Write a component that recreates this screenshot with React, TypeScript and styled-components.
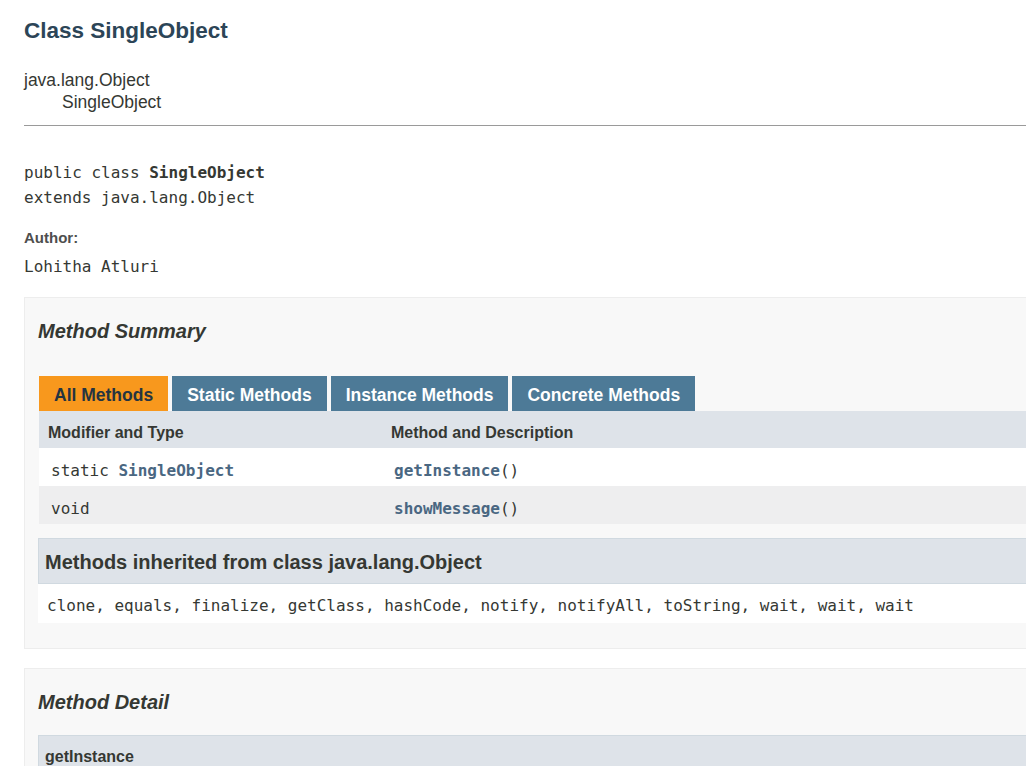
import React from "react";
import styled, { createGlobalStyle } from "styled-components";

const GlobalStyle = createGlobalStyle`
  html, body {
    margin: 0;
    padding: 0;
    overflow: hidden;
    background: #ffffff;
  }
  body {
    font-family: "Liberation Sans", Arial, Helvetica, sans-serif;
    color: #353833;
  }
`;

const Page = styled.div`
  width: 1070px;
  padding-left: 24px;
  box-sizing: border-box;
`;

const Title = styled.h2`
  margin: 18px 0 0;
  font-size: 22.5px;
  line-height: 26px;
  font-weight: bold;
  color: #2c4557;
`;

const Inheritance = styled.div`
  margin-top: 25px;
  font-size: 17.5px;
  line-height: 22.4px;
`;

const InheritLine = styled.div<{ $indent?: boolean }>`
  padding-left: ${(p) => (p.$indent ? "38px" : "0")};
`;

const Divider = styled.div`
  margin-top: 11px;
  border-top: 1px solid #9a9a9a;
  height: 0;
`;

const Mono = styled.div`
  font-family: "DejaVu Sans Mono", "Liberation Mono", monospace;
  font-size: 16px;
  line-height: 26px;
  color: #353833;
`;

const Signature = styled(Mono)`
  margin-top: 34px;
  line-height: 25px;
`;

const Strong = styled.b`
  font-weight: bold;
`;

const DtLabel = styled.div`
  margin-top: 19px;
  font-size: 15px;
  line-height: 18px;
  font-weight: bold;
  color: #4e4e4e;
`;

const DdValue = styled(Mono)`
  margin-top: 7px;
`;

const Block = styled.section<{ $gap: number }>`
  margin-top: ${(p) => p.$gap}px;
  background: #f8f8f8;
  border: 1px solid #ededed;
  padding: 21px 0 25px 14px;
`;

const BlockHeading = styled.h3`
  margin: 0 0 0 -1px;
  font-size: 20px;
  line-height: 24px;
  font-weight: bold;
  font-style: italic;
  color: #353833;
`;

const Tabs = styled.div`
  display: flex;
  gap: 4px;
  margin-top: 33px;
`;

const Tab = styled.span<{ $active?: boolean }>`
  display: block;
  height: 35px;
  box-sizing: border-box;
  padding: 3px 15px 0;
  line-height: 32px;
  font-size: 17.5px;
  font-weight: bold;
  white-space: nowrap;
  background: ${(p) => (p.$active ? "#f8981d" : "#4d7a97")};
  color: ${(p) => (p.$active ? "#253441" : "#ffffff")};
`;

const SummaryTable = styled.table`
  width: 100%;
  border-collapse: collapse;
  border-spacing: 0;
`;

const Th = styled.th<{ $w?: number }>`
  width: ${(p) => (p.$w ? `${p.$w}px` : "auto")};
  box-sizing: border-box;
  background: #dee3e9;
  text-align: left;
  padding: 12px 3px 5px 9px;
  font-size: 16px;
  line-height: 20px;
  font-weight: bold;
  color: #353833;
  white-space: nowrap;
`;

const Tr = styled.tr<{ $alt?: boolean }>`
  background: ${(p) => (p.$alt ? "#eeeeef" : "#ffffff")};
`;

const Td = styled.td`
  padding: 13px 3px 5px 12px;
  font-family: "DejaVu Sans Mono", "Liberation Mono", monospace;
  font-size: 16px;
  line-height: 20px;
  color: #353833;
  white-space: nowrap;
`;

const Link = styled.a`
  color: #4a6782;
  font-weight: bold;
  text-decoration: none;
`;

const Inherited = styled.div`
  margin-top: 14px;
  margin-left: -1px;
`;

const InheritedHeader = styled.h3`
  margin: 0;
  background: #dee3e9;
  border: 1px solid #d0d9e0;
  padding: 11px 0 9px 6px;
  font-size: 20px;
  line-height: 24px;
  font-weight: bold;
  color: #353833;
`;

const InheritedBody = styled.div`
  background: #ffffff;
  padding: 12px 0 7px 9px;
  font-family: "DejaVu Sans Mono", "Liberation Mono", monospace;
  font-size: 16px;
  line-height: 20px;
  color: #353833;
  white-space: nowrap;
`;

const DetailHeader = styled.h4`
  margin: 21px 0 0 -1px;
  background: #dee3e9;
  border: 1px solid #d0d9e0;
  padding: 11px 0 5px 6px;
  font-size: 16px;
  line-height: 20px;
  font-weight: bold;
  color: #353833;
`;

const methods = [
  { type: "static", typeLink: "SingleObject", name: "getInstance" },
  { type: "void", typeLink: "", name: "showMessage" },
];

export default function App() {
  return (
    <>
      <GlobalStyle />
      <Page>
        <Title>Class SingleObject</Title>
        <Inheritance>
          <InheritLine>java.lang.Object</InheritLine>
          <InheritLine $indent>SingleObject</InheritLine>
        </Inheritance>
        <Divider />
        <Signature>
          <div>
            public class <Strong>SingleObject</Strong>
          </div>
          <div>extends java.lang.Object</div>
        </Signature>
        <DtLabel>Author:</DtLabel>
        <DdValue>Lohitha Atluri</DdValue>

        <Block $gap={17}>
          <BlockHeading>Method Summary</BlockHeading>
          <Tabs>
            <Tab $active>All Methods</Tab>
            <Tab>Static Methods</Tab>
            <Tab>Instance Methods</Tab>
            <Tab>Concrete Methods</Tab>
          </Tabs>
          <SummaryTable>
            <thead>
              <tr>
                <Th $w={343}>Modifier and Type</Th>
                <Th>Method and Description</Th>
              </tr>
            </thead>
            <tbody>
              {methods.map((m, i) => (
                <Tr key={m.name} $alt={i % 2 === 1}>
                  <Td>
                    {m.type}
                    {m.typeLink && (
                      <>
                        {" "}
                        <Link>{m.typeLink}</Link>
                      </>
                    )}
                  </Td>
                  <Td>
                    <Link>{m.name}</Link>()
                  </Td>
                </Tr>
              ))}
            </tbody>
          </SummaryTable>
          <Inherited>
            <InheritedHeader>Methods inherited from class java.lang.Object</InheritedHeader>
            <InheritedBody>
              clone, equals, finalize, getClass, hashCode, notify, notifyAll, toString, wait, wait, wait
            </InheritedBody>
          </Inherited>
        </Block>

        <Block $gap={19}>
          <BlockHeading>Method Detail</BlockHeading>
          <DetailHeader>getInstance</DetailHeader>
        </Block>
      </Page>
    </>
  );
}
